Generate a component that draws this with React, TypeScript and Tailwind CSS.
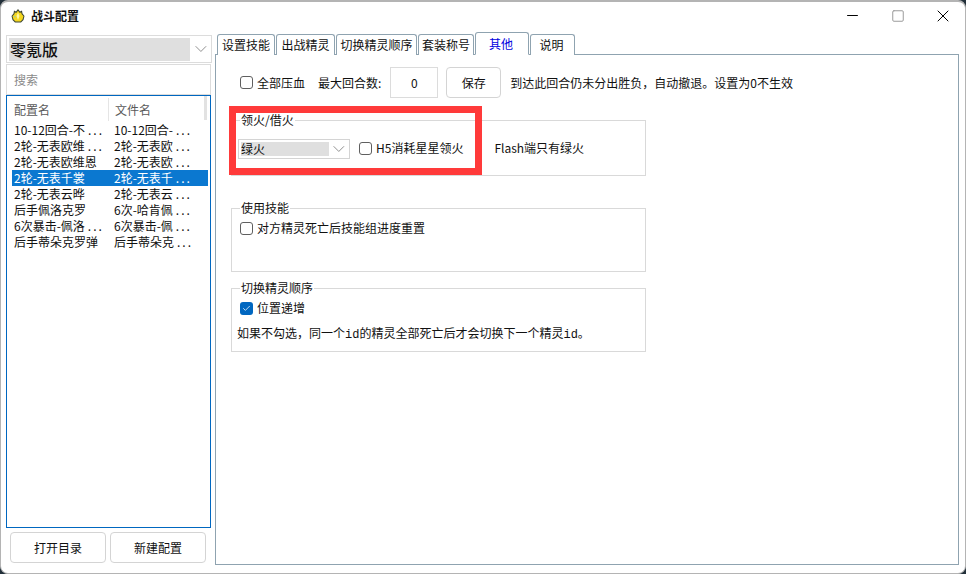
import { Check, ChevronDown, Minus, Square, X } from "lucide-react";
import type { ReactNode } from "react";

const tabs = [
  { label: "设置技能", w: "w-[58px]" },
  { label: "出战精灵", w: "w-[59px]" },
  { label: "切换精灵顺序", w: "w-[81px]" },
  { label: "套装称号", w: "w-[56px]" },
  { label: "其他", w: "w-[54px] pr-[2px]", active: true },
  { label: "说明", w: "w-[45px] pr-[2px]" },
];

const rows = [
  ["10-12回合-不", "10-12回合-"],
  ["2轮-无表欧维", "2轮-无表欧"],
  ["2轮-无表欧维恩", "2轮-无表欧"],
  ["2轮-无表千裳", "2轮-无表千"],
  ["2轮-无表云晔", "2轮-无表云"],
  ["后手佩洛克罗", "6次-哈肯佩"],
  ["6次暴击-佩洛", "6次暴击-佩"],
  ["后手蒂朵克罗弹", "后手蒂朵克"],
];

function Cell({ text, full }: { text: string; full?: boolean }) {
  return (
    <span className="whitespace-nowrap">
      {text}
      {!full && <span className="ml-[3px] tracking-[2px]">...</span>}
    </span>
  );
}

function CheckBox({ checked, label }: { checked?: boolean; label: string }) {
  return (
    <label className="flex items-center gap-[4px] text-[12px] leading-[14px]">
      {checked ? (
        <span className="grid h-[13px] w-[13px] place-items-center rounded-[3px] bg-[#0067c0]">
          <Check className="h-[9px] w-[9px] text-white" strokeWidth={2} />
        </span>
      ) : (
        <span className="h-[13px] w-[13px] rounded-[3px] border border-[#5f5f5f] bg-white" />
      )}
      <span>{label}</span>
    </label>
  );
}

function Group({
  title,
  className,
  children,
}: {
  title: string;
  className: string;
  children: ReactNode;
}) {
  return (
    <div className={`relative ml-[15px] w-[415px] border border-[#d9d9d9] ${className}`}>
      <span className="absolute left-[8px] top-[-8px] bg-white px-[1px] text-[12px] leading-[14px]">{title}</span>
      {children}
    </div>
  );
}

function GemIcon() {
  return (
    <svg viewBox="0 0 14 14" className="h-[14px] w-[14px]">
      <path d="M7 0 9 2.500 11 1.500 11.500 4.500 13.500 7 12.500 11 10 13.500H4L1.500 11 .5 7 2.500 4.500 3 1.500 5 2.500z" fill="#3c4634" />
      <path d="M7 1.800 8.800 4 10.200 3.200 10.500 5 12.500 7.200 11.500 10.500 9.500 12.500H4.500L2.500 10.500 1.500 7.200 3.500 5 3.800 3.200 5.200 4z" fill="#f5d71e" />
      <path d="M7 3.500 8.500 7 7 11 5.500 7z" fill="#fff6a0" />
      <path d="M3 7h1.500l-.5 2z" fill="#6fc9d8" />
    </svg>
  );
}

export default function App() {
  return (
    <div className="h-[574px] w-[966px] overflow-hidden bg-[#22303a] font-['Noto_Sans_CJK_SC','Liberation_Sans',sans-serif] text-[#111]">
      <div className="relative flex h-[574px] w-[966px] flex-col rounded-[8px] border-t-2 border-r border-b border-l border-[#b4b4b4] bg-white">
        {/* Title bar */}
        <div className="flex h-[30px] shrink-0 items-center pb-[2px] pl-[10px]">
          <GemIcon />
          <span className="ml-[6px] text-[12px] font-bold leading-[14px]">战斗配置</span>
          <div className="ml-auto flex items-center pb-[1px]">
            <span className="grid w-[45px] place-items-center">
              <Minus className="h-[17px] w-[17px] text-black" strokeWidth={1.4} />
            </span>
            <span className="grid w-[45px] place-items-center">
              <Square className="h-[14px] w-[14px] text-[#9a9a9a]" strokeWidth={1.7} />
            </span>
            <span className="grid w-[45px] place-items-center">
              <X className="h-[20px] w-[20px] text-black" strokeWidth={1.2} />
            </span>
          </div>
        </div>

        <div className="flex min-h-0 flex-1 pb-[8px] pl-[5px] pr-[6px]">
          {/* Left column */}
          <div className="flex w-[206px] shrink-0 flex-col pt-[3px]">
            <div className="flex h-[28px] items-center border border-[#dcdcdc] pl-[2px]">
              <span className="flex h-[23px] w-[183px] items-center bg-[#dfdfdf] pl-[1px] text-[16px] font-medium leading-[18px]">零氪版</span>
              <ChevronDown className="ml-[1px] h-[20px] w-[20px] text-[#777]" strokeWidth={1} />
            </div>
            <div className="mr-px mt-px flex h-[31px] items-center border border-[#dcdcdc] pl-[7px] text-[12px] text-[#8a8a8a]">
              搜索
            </div>
            <div className="mr-px flex h-[433px] flex-col border border-[#0067c0] px-[5px]">
              <div className="relative flex h-[25px] shrink-0 items-center pt-[2px] text-[12px] text-[#5a5a5a]">
                <span className="w-[96px] pl-[2px]">配置名</span>
                <span className="h-[23px] border-l border-[#e5e5e5] pl-[6px] leading-[23px]">文件名</span>
                <span className="absolute right-[-2px] top-0 h-[24px] w-[3px] bg-[#e2e2e2]" />
              </div>
              <div className="mt-[1px] flex flex-col">
                {rows.map(([a, b], i) => (
                  <div
                    key={i}
                    className={`flex h-[16px] w-[196px] items-center text-[12px] leading-[16px] ${
                      i === 3 ? "bg-[#0b78d0] text-white" : ""
                    }`}
                  >
                    <span className="w-[102px] pl-[2px]">
                      <Cell text={a} full={i === 2 || i === 3 || i === 4 || i === 5 || i === 7} />
                    </span>
                    <span>
                      <Cell text={b} />
                    </span>
                  </div>
                ))}
              </div>
            </div>
            <div className="mt-[4px] flex gap-[4px] pl-[4px]">
              <button className="h-[31px] w-[96px] rounded-[4px] border border-[#d4d4d4] bg-white text-[12px]">打开目录</button>
              <button className="h-[31px] w-[96px] rounded-[4px] border border-[#d4d4d4] bg-white text-[12px]">新建配置</button>
            </div>
          </div>

          {/* Right column */}
          <div className="ml-[3px] flex min-w-0 flex-1 flex-col">
            <div className="relative z-10 flex h-[23px] shrink-0 items-end gap-[1px] pl-[2px]">
              {tabs.map((t) => (
                <div
                  key={t.label}
                  className={`${t.w} flex items-center justify-center rounded-t-[3px] border border-[#8fa3b0] text-[12px] leading-[14px] ${
                    t.active
                      ? "h-[23px] border-b-white bg-white text-[#0000e0]"
                      : "h-[21px] border-b-0 bg-white"
                  }`}
                >
                  {t.label}
                </div>
              ))}
            </div>
            <div className="mt-[-1px] min-h-0 flex-1 border border-[#8fa3b0] pt-[12px]">
              <div className="flex items-center pl-[24px] text-[12px]">
                <CheckBox label="全部压血" />
                <span className="ml-[13px]">最大回合数:</span>
                <span className="ml-[9px] grid h-[31px] w-[48px] place-items-center border border-[#dcdcdc]">0</span>
                <button className="ml-[8px] h-[31px] w-[55px] rounded-[4px] border border-[#d4d4d4] bg-white text-[12px]">保存</button>
                <span className="ml-[9px] whitespace-nowrap">到达此回合仍未分出胜负，自动撤退。设置为0不生效</span>
              </div>

              <Group title="领火/借火" className="mt-[22px] flex h-[56px] items-center">
                <div className="ml-[6px] mt-[1px] flex h-[20px] w-[112px] items-center border border-[#d4d4d4] pl-[2px]">
                  <span className="flex h-[14px] w-[90px] items-center bg-[#dfdfdf] text-[12px]">绿火</span>
                  <ChevronDown className="h-[20px] w-[20px] text-[#777]" strokeWidth={1} />
                </div>
                <div className="ml-[9px]">
                  <CheckBox label="H5消耗星星领火" />
                </div>
                <span className="ml-[31px] text-[12px]">Flash端只有绿火</span>
              </Group>

              <Group title="使用技能" className="mt-[32px] h-[64px] pl-[8px] pt-[12px]">
                <CheckBox label="对方精灵死亡后技能组进度重置" />
              </Group>

              <Group title="切换精灵顺序" className="mt-[16px] h-[64px] pl-[8px] pt-[12px]">
                <CheckBox checked label="位置递增" />
                <p className="ml-[-3px] mt-[10px] whitespace-nowrap text-[12px] leading-[16px]">
                  如果不勾选，同一个<span className="font-['Liberation_Mono']">id</span>的精灵全部死亡后才会切换下一个精灵<span className="font-['Liberation_Mono']">id</span>。
                </p>
              </Group>
            </div>
          </div>
        </div>

        {/* Red annotation drawn over the screenshot */}
        <div className="pointer-events-none absolute left-[228px] top-[104px] z-20 h-[69px] w-[253px] border-[7px] border-[#ff3a3a]" />
      </div>
    </div>
  );
}
